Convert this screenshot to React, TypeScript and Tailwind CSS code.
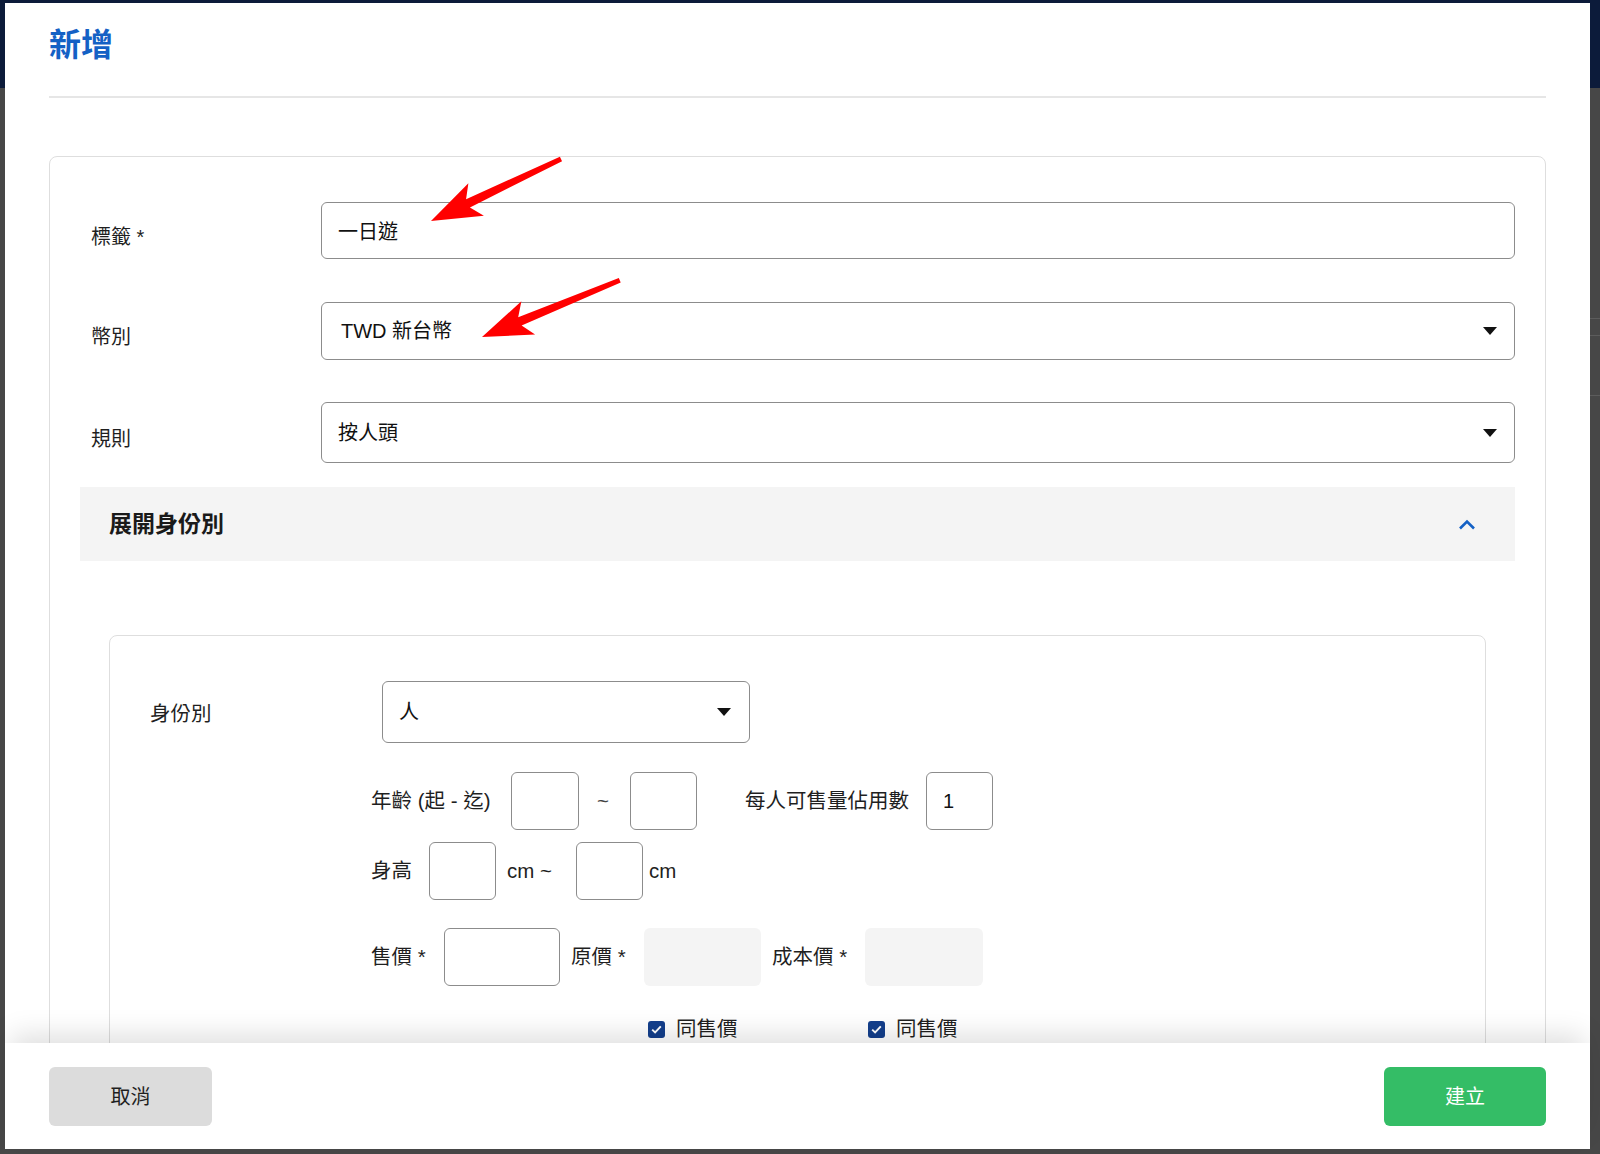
import React from 'react';

const FONT = "font-['Liberation_Sans','Noto_Sans_CJK_TC',sans-serif]";

function Caret() {
  return (
    <svg width="14" height="8" viewBox="0 0 14 8" className="shrink-0">
      <path d="M0 0h14L7 8z" fill="#111" />
    </svg>
  );
}

function SelectBox({ value, className = '' }: { value: string; className?: string }) {
  return (
    <div
      className={`flex items-center justify-between rounded-md border border-[#8c8c8c] bg-white pl-4 pr-[17px] text-[20px] text-[#111] ${className}`}
    >
      <span>{value}</span>
      <Caret />
    </div>
  );
}

function FieldRow({ label, children, className = '' }: { label: string; children: React.ReactNode; className?: string }) {
  return (
    <div className={`flex items-center ${className}`}>
      <div className="w-[241px] shrink-0 pl-[11px] pt-3 text-[20px] text-[#1f1f1f]">{label}</div>
      <div className="flex-1">{children}</div>
    </div>
  );
}

function SmallBox({ value = '', className = '' }: { value?: string; className?: string }) {
  return (
    <div className={`flex h-[58px] items-center rounded-md border border-[#8c8c8c] bg-white pl-4 text-[20px] text-[#111] ${className}`}>
      {value}
    </div>
  );
}

function Checked({ label }: { label: string }) {
  return (
    <div className="flex items-center gap-[11px]">
      <div className="flex h-[17px] w-[17px] items-center justify-center rounded-[3px] bg-[#143f8c]">
        <svg width="11" height="9" viewBox="0 0 11 9">
          <path d="M1.2 4.6 4.1 7.4 9.8 1.4" fill="none" stroke="#fff" strokeWidth="1.9" />
        </svg>
      </div>
      <span className="text-[20.5px] text-[#1f1f1f]">{label}</span>
    </div>
  );
}

// red annotation arrow: tip at (x, y), pointing back toward the tail
function Arrow({ x, y, angle, length }: { x: number; y: number; angle: number; length: number }) {
  return (
    <g transform={`translate(${x} ${y}) rotate(${angle})`}>
      <polygon
        points={`0,0 50,-18 41,-4.5 ${length},-2.5 ${length},2.5 41,4.5 50,18`}
        fill="#ff0000"
      />
    </g>
  );
}

export default function App() {
  return (
    <div className={`relative h-[1154px] w-[1600px] overflow-hidden bg-[#474747] ${FONT}`}>
      {/* page behind the modal */}
      <div className="h-[88px] bg-[#0c1b3a]" />
      <div className="ml-auto mt-[230px] h-px w-[12px] bg-[#5c5c5c]" />
      <div className="ml-auto mt-[16px] h-px w-[12px] bg-[#5c5c5c]" />
      <div className="ml-auto mt-[59px] h-px w-[12px] bg-[#5c5c5c]" />

      {/* modal */}
      <div className="absolute left-[5px] top-[3px] flex h-[1146px] w-[1585px] flex-col bg-white">
        <header className="px-[44px] pt-[18px]">
          <h1 className="text-[32px] font-bold leading-[48px] text-[#1461c5]">新增</h1>
          <div className="mt-[27px] h-[2px] bg-[#e6e6e6]" />
        </header>

        <main className="min-h-0 flex-1 overflow-hidden px-[44px] pt-[58px]">
          <div className="rounded-lg border border-[#dedede] px-[30px] pb-12 pt-[45px]">
            <FieldRow label="標籤 *">
              <input
                readOnly
                defaultValue="一日遊"
                className="h-[57px] w-full rounded-md border border-[#8c8c8c] bg-white pl-4 text-[20px] text-[#111] outline-none"
              />
            </FieldRow>
            <FieldRow label="幣別" className="mt-[43px]">
              <SelectBox value="TWD 新台幣" className="h-[58px] pl-[19px]" />
            </FieldRow>
            <FieldRow label="規則" className="mt-[42px]">
              <SelectBox value="按人頭" className="h-[61px]" />
            </FieldRow>

            {/* accordion */}
            <div className="mt-6 flex h-[74px] items-center justify-between bg-[#f4f4f4] pl-[29px] pr-[39px]">
              <span className="text-[23px] font-bold text-[#1a1a1a]">展開身份別</span>
              <svg width="18" height="11" viewBox="0 0 18 11">
                <path d="M2 9.5 9 2.5l7 7" fill="none" stroke="#1461c5" strokeWidth="2.6" />
              </svg>
            </div>

            <div className="mx-[29px] mt-[74px] rounded-lg border border-[#dedede] pb-12 pl-10 pt-[45px]">
              <div className="flex items-center">
                <div className="w-[232px] shrink-0 pt-1 text-[20.5px] text-[#1f1f1f]">身份別</div>
                <SelectBox value="人" className="h-[62px] w-[368px] pr-[18px]" />
              </div>

              <div className="ml-[221px] text-[20.5px] text-[#1f1f1f]">
                {/* age */}
                <div className="mt-[29px] flex items-center">
                  <span className="w-[140px]">年齡 (起 - 迄)</span>
                  <SmallBox className="w-[68px]" />
                  <span className="w-[51px] pl-[18px] text-[#444]">~</span>
                  <SmallBox className="w-[67px]" />
                  <span className="ml-[48px] w-[181px]">每人可售量佔用數</span>
                  <SmallBox value="1" className="w-[67px]" />
                </div>

                {/* height */}
                <div className="mt-3 flex items-center">
                  <span className="w-[58px]">身高</span>
                  <SmallBox className="w-[67px]" />
                  <span className="w-[80px] pl-[11px]">cm ~</span>
                  <SmallBox className="w-[67px]" />
                  <span className="ml-[6px]">cm</span>
                </div>

                {/* prices */}
                <div className="mt-[28px] flex items-center">
                  <span className="w-[73px]">售價 *</span>
                  <SmallBox className="w-[116px]" />
                  <span className="w-[84px] pl-[11px]">原價 *</span>
                  <div className="h-[58px] w-[117px] rounded-md bg-[#f4f4f4]" />
                  <span className="w-[104px] pl-[11px]">成本價 *</span>
                  <div className="h-[58px] w-[118px] rounded-md bg-[#f4f4f4]" />
                </div>

                <div className="mt-[28px] flex items-center pl-[277px]">
                  <div className="w-[220px]">
                    <Checked label="同售價" />
                  </div>
                  <Checked label="同售價" />
                </div>
              </div>
            </div>
          </div>
        </main>

        <footer className="relative z-10 flex h-[106px] shrink-0 items-start justify-between bg-white px-[44px] pt-[24px] shadow-[0_-14px_26px_-6px_rgba(0,0,0,0.13)]">
          <button className="h-[59px] w-[163px] rounded-md bg-[#dcdcdc] text-[20px] text-[#1f1f1f]">取消</button>
          <button className="h-[59px] w-[162px] rounded-md bg-[#34bd66] text-[20px] text-white">建立</button>
        </footer>
      </div>

      {/* annotation arrows drawn over the screenshot */}
      <svg className="pointer-events-none absolute inset-0" width="1600" height="1154">
        <Arrow x={431} y={221} angle={-25.5} length={144} />
        <Arrow x={482} y={337} angle={-22.4} length={149} />
      </svg>
    </div>
  );
}
